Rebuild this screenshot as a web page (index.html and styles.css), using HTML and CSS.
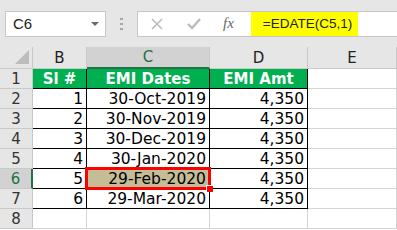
FILE: index.html
```html
<!DOCTYPE html>
<html lang="en">
    <head>
        <title>EMI Dates</title>
        <meta charset="utf-8" name="viewport" content="width=device-width, initial-scale=1">
        <link rel="stylesheet" href="styles.css">
    </head>
    <body>
        <div class="toolbar">
            <div class="namebox">
                <span>C6</span>
                <span class="caret"></span>
            </div>
            <div class="grip">
                <svg width="3" height="12" viewBox="0 0 3 12"><rect x="0" y="0" width="3" height="2" fill="#a6a6a6"/><rect x="0" y="5" width="3" height="2" fill="#a6a6a6"/><rect x="0" y="10" width="3" height="2" fill="#a6a6a6"/></svg>
            </div>
            <div class="formula">
                <span class="icon cancel">
                    <svg width="12" height="12" viewBox="0 0 12 12"><path d="M1 1L11 11M11 1L1 11" stroke="#bcbcbc" stroke-width="1.6" fill="none"/></svg>
                </span>
                <span class="icon enter">
                    <svg width="14" height="12" viewBox="0 0 14 12"><path d="M1 6L5 10L13 1" stroke="#bcbcbc" stroke-width="2.4" fill="none"/></svg>
                </span>
                <span class="fx">fx</span>
                <span class="expr">=EDATE(C5,1)</span>
            </div>
        </div>

        <div class="sheet">
            <div class="hd corner">
                <svg width="16" height="16" viewBox="0 0 16 16"><polygon points="15,1 15,15 1,15" fill="#bcbcbc"/></svg>
            </div>
            <div class="hd">B</div>
            <div class="hd active-col">C</div>
            <div class="hd">D</div>
            <div class="hd">E</div>

            <div class="rh">1</div>
            <div class="c t head">Sl #</div>
            <div class="c t head">EMI Dates</div>
            <div class="c t head">EMI Amt</div>
            <div class="c"></div>

            <div class="rh">2</div>
            <div class="c t num">1</div>
            <div class="c t num">30-Oct-2019</div>
            <div class="c t num">4,350</div>
            <div class="c"></div>

            <div class="rh">3</div>
            <div class="c t num">2</div>
            <div class="c t num">30-Nov-2019</div>
            <div class="c t num">4,350</div>
            <div class="c"></div>

            <div class="rh">4</div>
            <div class="c t num">3</div>
            <div class="c t num">30-Dec-2019</div>
            <div class="c t num">4,350</div>
            <div class="c"></div>

            <div class="rh">5</div>
            <div class="c t num">4</div>
            <div class="c t num">30-Jan-2020</div>
            <div class="c t num">4,350</div>
            <div class="c"></div>

            <div class="rh active-row">6</div>
            <div class="c t num">5</div>
            <div class="c t num selected">29-Feb-2020</div>
            <div class="c t num">4,350</div>
            <div class="c"></div>

            <div class="rh">7</div>
            <div class="c t num">6</div>
            <div class="c t num">29-Mar-2020</div>
            <div class="c t num">4,350</div>
            <div class="c"></div>

            <div class="rh">8</div>
            <div class="c"></div>
            <div class="c"></div>
            <div class="c"></div>
            <div class="c"></div>
        </div>
    </body>
</html>
```

FILE: styles.css
```css
*{
    box-sizing: border-box;
}
body{
    margin: 0;
    width: 397px;
    height: 230px;
    overflow: hidden;
    background: #ffffff;
    font-family: "DejaVu Sans", Verdana, sans-serif;
}

/* formula bar */
.toolbar{
    display: flex;
    align-items: center;
    height: 47px;
    padding: 0 0 0 5px;
    background: #e6e6e6;
}
.namebox{
    display: flex;
    align-items: center;
    justify-content: space-between;
    width: 101px;
    height: 26px;
    padding: 0 6px 0 7px;
    background: #ffffff;
    border: 1px solid #c6c6c6;
    font-family: "Liberation Sans", Arial, sans-serif;
    font-size: 15px;
    color: #222222;
}
.caret{
    width: 0;
    height: 0;
    border-left: 4px solid transparent;
    border-right: 4px solid transparent;
    border-top: 4px solid #6b6b6b;
}
.grip{
    display: flex;
    justify-content: center;
    width: 31px;
}
.grip svg{
    display: block;
}
.formula{
    flex: 1;
    display: flex;
    align-items: center;
    height: 26px;
    margin-right: -2px;
    background: #ffffff;
    border: 1px solid #c6c6c6;
}
.icon{
    display: flex;
}
.cancel{
    margin-left: 13px;
}
.enter{
    margin-left: 24px;
}
.fx{
    margin-left: 22px;
    font-family: "Liberation Serif", "Times New Roman", serif;
    font-style: italic;
    font-size: 15px;
    color: #666666;
}
.expr{
    display: flex;
    align-items: center;
    height: 24px;
    margin-left: 17px;
    padding-left: 12px;
    width: 107px;
    background: #ffff00;
    font-family: "Liberation Sans", Arial, sans-serif;
    font-size: 13.5px;
    color: #222222;
}

/* grid */
.sheet{
    display: grid;
    grid-template-columns: 33px 54px 123px 98px 89px;
    grid-template-rows: 22px repeat(8, 20px);
}
.hd, .rh{
    display: flex;
    align-items: center;
    justify-content: center;
    background: #e6e6e6;
    border-right: 1px solid #c9c9c9;
    border-bottom: 1px solid #c9c9c9;
    font-size: 15px;
    color: #222222;
}
.corner{
    align-items: flex-end;
    justify-content: flex-end;
    padding: 0 2px 3px 0;
}
.corner svg{
    display: block;
}
.active-col{
    background: #d2d2d2;
    border-bottom: 2px solid #217346;
    color: #217346;
}
.rh{
    color: #333333;
}
.active-row{
    background: #d2d2d2;
    border-right: 2px solid #217346;
    color: #217346;
}
.c{
    display: flex;
    align-items: center;
    border-right: 1px solid #d4d4d4;
    border-bottom: 1px solid #d4d4d4;
    font-size: 15.5px;
    color: #000000;
    white-space: nowrap;
}
.c.t{
    border-right-color: #000000;
    border-bottom-color: #000000;
}
.head{
    justify-content: center;
    background: #00b050;
    color: #ffffff;
    font-size: 15px;
    font-weight: bold;
}
.num{
    justify-content: flex-end;
    padding-right: 3px;
}
.selected{
    position: relative;
    background: #c4bd97;
}
.selected::after{
    content: "";
    position: absolute;
    left: -2px;
    top: -2px;
    right: -2px;
    bottom: -2px;
    border: 3px solid #ff0000;
}
.selected::before{
    content: "";
    position: absolute;
    right: -4px;
    bottom: -4px;
    width: 6px;
    height: 6px;
    background: #ff0000;
    border-left: 1px solid #ffffff;
    border-top: 1px solid #ffffff;
    z-index: 1;
}
```
